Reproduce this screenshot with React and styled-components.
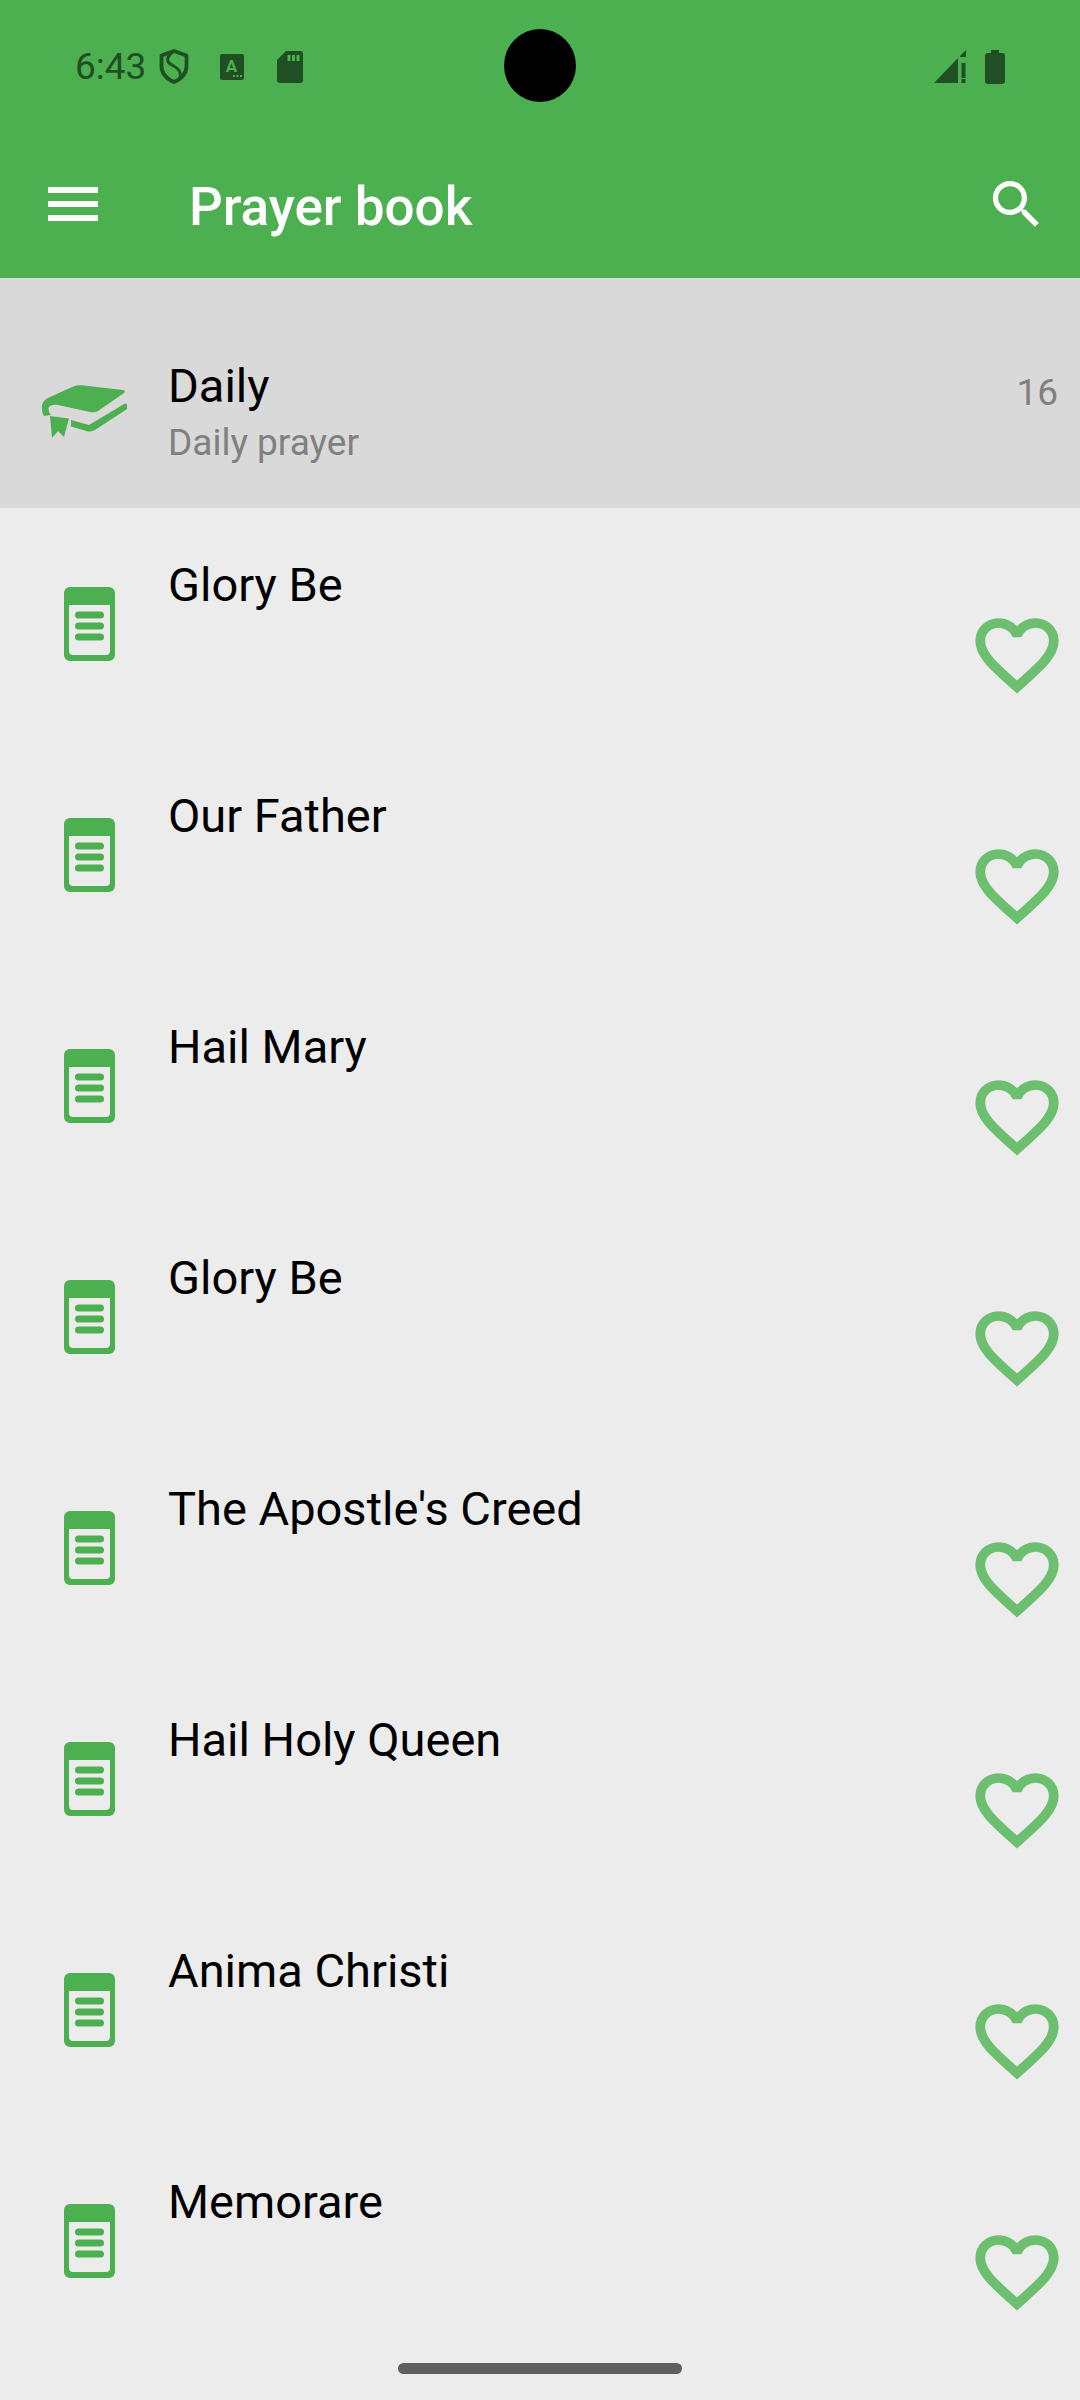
import React from 'react';
import styled, { createGlobalStyle } from 'styled-components';

const GlobalStyle = createGlobalStyle`
  html, body {
    margin: 0;
    padding: 0;
    background: #ececec;
  }
  body {
    font-family: Roboto, 'Liberation Sans', sans-serif;
  }
`;

const Screen = styled.div`
  position: relative;
  width: 1080px;
  height: 2400px;
  overflow: hidden;
  background: #ececec;
`;

const Header = styled.header`
  background: #4caf50;
  height: 278px;
`;

const StatusBar = styled.div`
  height: 130px;
  box-sizing: border-box;
  display: flex;
  align-items: center;
  padding: 3px 75px 0 75px;
  color: #1f4f22;
`;

const Time = styled.span`
  font-size: 37px;
  line-height: 40px;
  margin-right: 13px;
`;

const StatusIcon = styled.svg`
  display: block;
  flex: none;
  margin-left: ${(p) => p.$left || 0}px;
`;

const Spacer = styled.div`
  flex: 1;
`;

const Camera = styled.div`
  position: absolute;
  left: 504px;
  top: 29px;
  width: 72px;
  height: 73px;
  border-radius: 50%;
  background: #000;
`;

const Toolbar = styled.div`
  height: 148px;
  display: flex;
  align-items: center;
  padding: 0 32px 0 48px;
`;

const MenuIcon = styled.svg`
  display: block;
  flex: none;
  margin-right: 91px;
`;

const Title = styled.h1`
  flex: 1;
  margin: 6px 0 0 0;
  font-size: 53px;
  font-weight: 500;
  line-height: 60px;
  color: #fff;
`;

const Category = styled.div`
  height: 230px;
  display: flex;
  background: #d9d9d9;
`;

const CategoryIcon = styled.svg`
  display: block;
  flex: none;
  margin: 100px 0 0 36px;
`;

const CategoryText = styled.div`
  flex: 1;
  padding: 82px 0 0 36px;
`;

const Name = styled.div`
  font-size: 47px;
  line-height: 52px;
  color: #000;
`;

const Description = styled.div`
  font-size: 37px;
  line-height: 44px;
  margin-top: 9px;
  color: #808080;
`;

const Count = styled.div`
  font-size: 37px;
  line-height: 44px;
  color: #808080;
  padding: 93px 22px 0 0;
`;

const Row = styled.div`
  height: 231px;
  display: flex;
`;

const DocIcon = styled.svg`
  display: block;
  flex: none;
  margin: 79px 0 0 64px;
`;

const RowText = styled.div`
  flex: 1;
  padding: 51px 0 0 53px;
`;

const Heart = styled.svg`
  display: block;
  flex: none;
  margin: 99px 14px 0 1px;
`;

const SearchIcon = styled.svg`
  display: block;
  flex: none;
`;

const HomeBar = styled.div`
  position: absolute;
  left: 398px;
  top: 2363px;
  width: 284px;
  height: 11px;
  border-radius: 6px;
  background: #5f5f5f;
`;

const prayers = [
  'Glory Be',
  'Our Father',
  'Hail Mary',
  'Glory Be',
  "The Apostle's Creed",
  'Hail Holy Queen',
  'Anima Christi',
  'Memorare',
];

const Document = () => (
  <DocIcon width="51" height="74" viewBox="0 0 51 74">
    <path
      fill="#4caf50"
      fillRule="evenodd"
      d="M6 0H45a6 6 0 0 1 6 6V68a6 6 0 0 1-6 6H6a6 6 0 0 1-6-6V6a6 6 0 0 1 6-6ZM5 18V64a4 4 0 0 0 4 4H42a4 4 0 0 0 4-4V18Z"
    />
    <rect x="11" y="24.500" width="29" height="7" rx="3.5" fill="#4caf50" />
    <rect x="11" y="35.500" width="29" height="7" rx="3.5" fill="#4caf50" />
    <rect x="11" y="46.500" width="29" height="7" rx="3.5" fill="#4caf50" />
  </DocIcon>
);

const Favorite = () => (
  <Heart width="98" height="96" viewBox="0 0 24 24" preserveAspectRatio="none">
    <path
      fill="#6dbf70"
      stroke="#6dbf70"
      strokeWidth="0.4"
      d="M16.5 3c-1.74 0-3.41.81-4.5 2.09C10.91 3.81 9.24 3 7.5 3 4.42 3 2 5.42 2 8.5c0 3.78 3.4 6.86 8.55 11.54L12 21.35l1.45-1.32C18.6 15.36 22 12.28 22 8.5 22 5.42 19.58 3 16.5 3zm-4.4 15.55l-.1.1-.1-.1C7.14 14.24 4 11.39 4 8.5 4 6.5 5.5 5 7.5 5c1.54 0 3.04.99 3.57 2.36h1.87C13.46 5.99 14.96 5 16.5 5c2 0 3.5 1.5 3.5 3.5 0 2.89-3.14 5.74-7.9 10.05z"
    />
  </Heart>
);

const App = () => (
  <Screen>
    <GlobalStyle />
    <Header>
      <StatusBar>
        <Time>6:43</Time>
        <StatusIcon width="30" height="35" viewBox="0 0 30 35">
          <path
            fill="none"
            stroke="#1f4f22"
            strokeWidth="3.8"
            strokeLinejoin="round"
            d="M15 2 L27.500 6.500 V17 C27.500 25 22 30 15 33 C8 30 2.500 25 2.500 17 V6.500 Z"
          />
          <path
            fill="none"
            stroke="#1f4f22"
            strokeWidth="3"
            d="M14 3 C7 8 7 13 13 16 C19 19 24 23 20 31"
          />
        </StatusIcon>
        <StatusIcon $left={31} width="24" height="26" viewBox="0 0 24 26">
          <rect width="24" height="26" rx="2" fill="#1f4f22" />
          <text x="11.5" y="18" textAnchor="middle" fontFamily="Roboto" fontWeight="700" fontSize="17" fill="#4caf50">A</text>
          <rect x="13" y="21" width="2" height="2" fill="#4caf50" />
          <rect x="16.5" y="21" width="2" height="2" fill="#4caf50" />
          <rect x="20" y="21" width="2" height="2" fill="#4caf50" />
        </StatusIcon>
        <StatusIcon $left={33} width="26" height="32" viewBox="0 0 26 32">
          <path fill="#1f4f22" d="M9 0H23a3 3 0 0 1 3 3V29a3 3 0 0 1-3 3H3a3 3 0 0 1-3-3V9Z" />
          <rect x="10.5" y="4" width="3" height="6" fill="#4caf50" />
          <rect x="15" y="4" width="3" height="6" fill="#4caf50" />
          <rect x="19.5" y="4" width="3" height="6" fill="#4caf50" />
        </StatusIcon>
        <Spacer />
        <StatusIcon width="33" height="33" viewBox="0 0 33 33">
          <path fill="#1f4f22" d="M0 33H24V8Z" />
          <path fill="#1f4f22" d="M26 6 32 0V7H26Z" />
          <rect x="27.500" y="13" width="4" height="15" fill="#1f4f22" />
          <rect x="27.500" y="29" width="4" height="4" fill="#1f4f22" />
        </StatusIcon>
        <StatusIcon $left={18} width="20" height="34" viewBox="0 0 20 34">
          <path fill="#1f4f22" d="M6 0H14V3H17a3 3 0 0 1 3 3V31a3 3 0 0 1-3 3H3a3 3 0 0 1-3-3V6a3 3 0 0 1 3-3H6Z" />
        </StatusIcon>
      </StatusBar>
      <Toolbar>
        <MenuIcon width="50" height="34" viewBox="0 0 50 34">
          <rect width="50" height="6" fill="#fff" />
          <rect y="14" width="50" height="6" fill="#fff" />
          <rect y="28" width="50" height="6" fill="#fff" />
        </MenuIcon>
        <Title>Prayer book</Title>
        <SearchIcon width="63" height="63" viewBox="0 0 24 24">
          <path
            fill="#fff"
            d="M15.5 14h-.79l-.28-.27C15.41 12.59 16 11.11 16 9.5 16 5.91 13.09 3 9.5 3S3 5.91 3 9.5 5.91 16 9.5 16c1.61 0 3.09-.59 4.23-1.57l.27.28v.79l5 4.99L20.49 19l-4.99-5zm-6 0C7.01 14 5 11.99 5 9.5S7.01 5 9.5 5 14 7.01 14 9.5 11.99 14 9.5 14z"
          />
        </SearchIcon>
      </Toolbar>
    </Header>
    <Camera />
    <Category>
      <CategoryIcon width="96" height="66" viewBox="0 0 96 66">
        <path
          fill="#4caf50"
          d="M6 31C5 25 9 21 14 19L36 9C40 7 44 7 48 7.500L87 12Q90 13 88 15L62 33Q58 35 54 34L22 27C17 26 13 27.500 12.500 30C12.500 33 13 35 15 37L8 38C7 36 6 34 6 31Z"
        />
        <path fill="#4caf50" d="M14 38 33 40.500 28 59 22 53 16 60Z" />
        <path
          fill="#4caf50"
          d="M35 42 53 47 89 25.500Q91 25 91 27.500V31L59 52Q55 54 52 53.500L35 48.500Z"
        />
      </CategoryIcon>
      <CategoryText>
        <Name>Daily</Name>
        <Description>Daily prayer</Description>
      </CategoryText>
      <Count>16</Count>
    </Category>
    {prayers.map((name, i) => (
      <Row key={i}>
        <Document />
        <RowText>
          <Name>{name}</Name>
        </RowText>
        <Favorite />
      </Row>
    ))}
    <HomeBar />
  </Screen>
);

export default App;
